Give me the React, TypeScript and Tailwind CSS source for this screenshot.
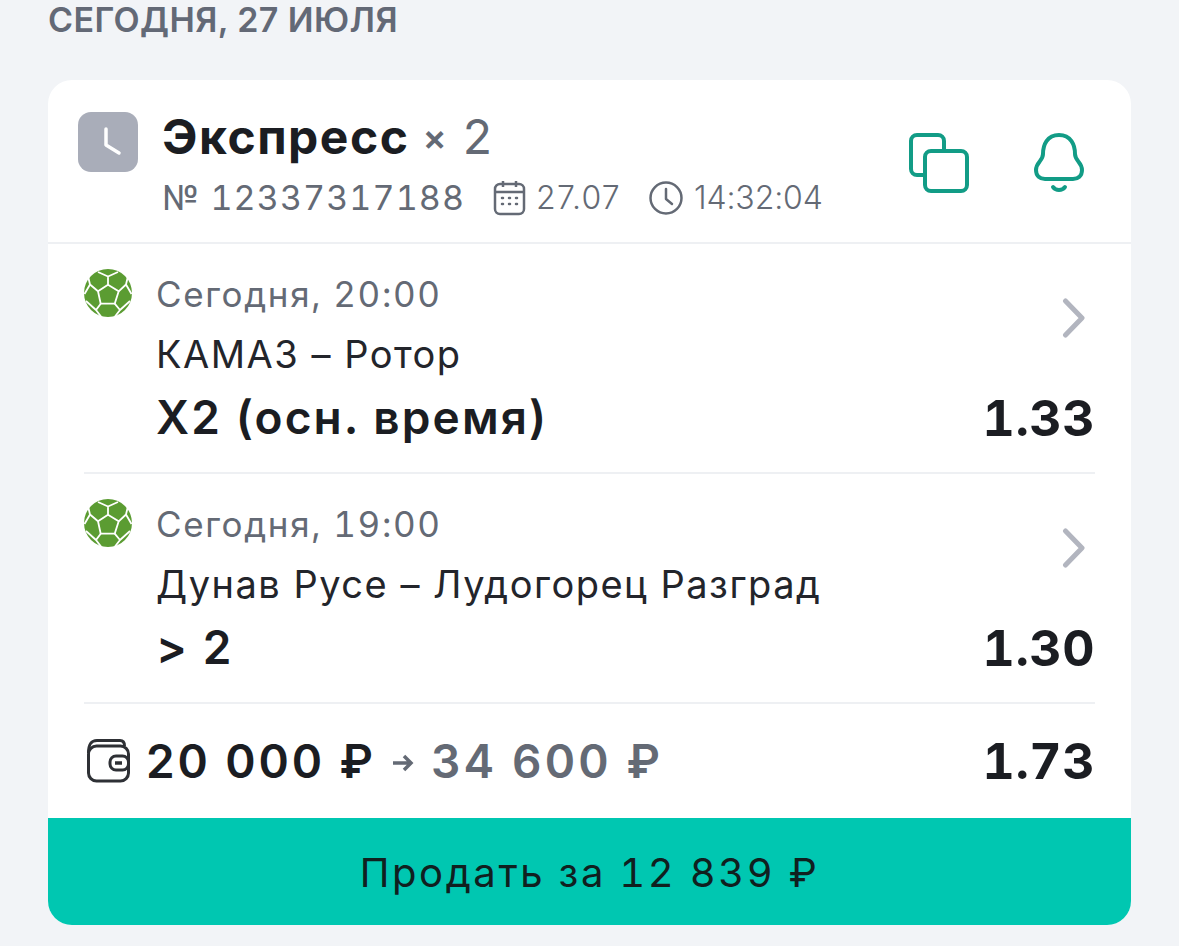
function Ball() {
  return (
    <svg className="h-[48px] w-[48px] shrink-0" viewBox="0 0 48 48">
      <circle cx="24" cy="24" r="24" fill="#5b9c32" />
      <g fill="none" stroke="#ffffff" strokeWidth="1.8" strokeLinejoin="round">
        <path d="M24 15.700 L34.700 22.300 L30.700 34.700 L16.700 34.700 L14 22.300 Z" />
        <path d="M24 15.700 V7.500 L14 3 M24 7.500 L34 3" />
        <path d="M34.700 22.300 L42 15.500 L44 7 M42 15.500 L47.500 25" />
        <path d="M14 22.300 L6 15.500 L4 7 M6 15.500 L0.500 25" />
        <path d="M30.700 34.700 L36 41 L46 32 M36 41 L31 47.500" />
        <path d="M16.700 34.700 L12 41 L2 32 M12 41 L17 47.500" />
      </g>
    </svg>
  );
}

function Chevron() {
  return (
    <svg className="h-[40px] w-[24px]" viewBox="0 0 24 40" fill="none" stroke="#b2b5bf" strokeWidth="5" strokeLinecap="round" strokeLinejoin="round">
      <path d="M3.5 3 L20 20 L3.5 37" />
    </svg>
  );
}

function Bet({ time, teams, pick, odds }: { time: string; teams: string; pick: string; odds: string }) {
  return (
    <div className="flex h-[230px] border-b-2 border-[#eef0f3] pt-[25px]">
      <Ball />
      <div className="ml-[24px] flex-1">
        <div className="text-[35px] leading-[50px] tracking-[1.64px] text-[#646a75] tabular-nums">{time}</div>
        <div className="mt-[10px] text-[38px] leading-[50px] tracking-[1.5px] text-[#23252b]">{teams}</div>
        <div className="mt-[13px] text-[46px] font-semibold leading-[50px] tracking-[2.1px] text-[#1b1d22]">{pick}</div>
      </div>
      <div className="flex flex-col items-end">
        <div className="mr-[9px] mt-[29px]"><Chevron /></div>
        <div className="mt-[55px] text-[50px] font-bold leading-[50px] tracking-[0.5px] text-[#1b1d22] tabular-nums">{odds}</div>
      </div>
    </div>
  );
}

export default function App() {
  return (
    <main className="h-[946px] overflow-hidden bg-[#f2f4f7] px-[48px] font-['Inter',sans-serif]">
      <h2 className="h-[80px] text-[34px] font-semibold leading-[40px] tracking-[0.4px] text-[#636976]">СЕГОДНЯ, 27 ИЮЛЯ</h2>
      <div className="h-[845px] overflow-hidden rounded-[24px] bg-white">
        <header className="flex h-[164px] border-b-2 border-[#eef0f3] pl-[30px] pr-[45px] pt-[32px]">
          <div className="flex h-[60px] w-[60px] items-center justify-center rounded-[13px] bg-[#a9adb9]">
            <svg className="h-[60px] w-[60px]" viewBox="0 0 60 60" fill="none" stroke="#ffffff" strokeWidth="3.5" strokeLinecap="round" strokeLinejoin="round">
              <path d="M28 17 V33 L41 41" />
            </svg>
          </div>
          <div className="ml-[24px] flex-1">
            <div className="flex h-[50px] items-center">
              <span className="text-[48px] font-bold leading-[50px] tracking-[1.5px] text-[#1b1d22]">Экспресс</span>
              <span className="ml-[13px] text-[36px] font-semibold leading-[50px] text-[#646a75]">×</span>
              <span className="ml-[16px] text-[48px] leading-[50px] text-[#646a75]">2</span>
            </div>
            <div className="mt-[14px] flex items-center text-[#646a75]">
              <span className="text-[34px] leading-[44px] tracking-[1.1px] tabular-nums">№ 12337317188</span>
              <svg className="ml-[28px] h-[36px] w-[34px]" viewBox="0 0 34 36" fill="none" stroke="currentColor" strokeWidth="2.5">
                <rect x="2" y="4" width="29" height="30" rx="5" />
                <path d="M2 12 H31 M10 1 V7 M23 1 V7" />
                <path d="M9 18 H10 M16 18 H17 M23 18 H24 M9 24 H10 M16 24 H17 M23 24 H24" strokeLinecap="round" />
              </svg>
              <span className="ml-[9px] text-[32px] font-light leading-[44px] tracking-[1.2px]">27.07</span>
              <svg className="ml-[27px] h-[36px] w-[36px]" viewBox="0 0 36 36" fill="none" stroke="currentColor" strokeWidth="2.5" strokeLinecap="round" strokeLinejoin="round">
                <circle cx="18" cy="18" r="15.5" />
                <path d="M18 9 V19 L24 24" />
              </svg>
              <span className="ml-[10px] text-[32px] font-light leading-[44px] tracking-[-0.1px]">14:32:04</span>
            </div>
          </div>
          <svg className="mt-[20px] h-[62px] w-[62px]" viewBox="0 0 62 62" fill="none" stroke="#129c86" strokeWidth="4">
            <path d="M16 43 H9 A6 6 0 0 1 3 37 V9 A6 6 0 0 1 9 3 H30 A6 6 0 0 1 36 9 V19" />
            <rect x="17" y="19" width="42" height="40" rx="6" />
          </svg>
          <svg className="ml-[62px] mt-[20px] h-[62px] w-[54px]" viewBox="0 0 54 62" fill="none" stroke="#129c86" strokeWidth="4" strokeLinecap="round">
            <path d="M27 3 C15 3 11 13 11 22 C11 29 4 30 4 38 C4 44 8 47 13 47 H41 C46 47 50 44 50 38 C50 30 43 29 43 22 C43 13 39 3 27 3 Z" />
            <path d="M21 55 C24 59 30 59 33 55" />
          </svg>
        </header>
        <div className="mx-[36px]">
          <Bet time="Сегодня, 20:00" teams="КАМАЗ – Ротор" pick="Х2 (осн. время)" odds="1.33" />
          <Bet time="Сегодня, 19:00" teams="Дунав Русе – Лудогорец Разград" pick="> 2" odds="1.30" />
          <div className="flex h-[114px] items-center">
            <svg className="h-[44px] w-[46px]" viewBox="0 0 46 44" fill="none" stroke="#2e3035" strokeWidth="3">
              <path d="M4.500 14 C4.500 5 7 1.500 13 1.500 H36 C39 1.500 40.500 3 40.500 7" />
              <rect x="4.500" y="7" width="40" height="35" rx="8" />
              <rect x="26" y="17" width="18.500" height="14" rx="6" fill="#ffffff" />
              <path d="M31 24 H38" strokeWidth="3.500" />
            </svg>
            <span className="ml-[16px] text-[46px] font-semibold leading-[50px] tracking-[2.9px] text-[#1b1d22]">20 000 ₽</span>
            <svg className="ml-[16px] mt-[3px] h-[20px] w-[22px]" viewBox="0 0 22 20" fill="none" stroke="#646a75" strokeWidth="3.5">
              <path d="M1 10 H19 M12 3 L19 10 L12 17" />
            </svg>
            <span className="ml-[17px] text-[46px] font-semibold leading-[50px] tracking-[3.2px] text-[#646a75]">34 600 ₽</span>
            <span className="ml-auto text-[50px] font-bold leading-[50px] tracking-[0.5px] text-[#1b1d22] tabular-nums">1.73</span>
          </div>
        </div>
        <button className="flex h-[107px] w-full items-center justify-center bg-[#00c7b1] pt-[2px] text-[40px] tracking-[2.6px] text-[#10201f] tabular-nums">
          Продать за 12 839 ₽
        </button>
      </div>
    </main>
  );
}
